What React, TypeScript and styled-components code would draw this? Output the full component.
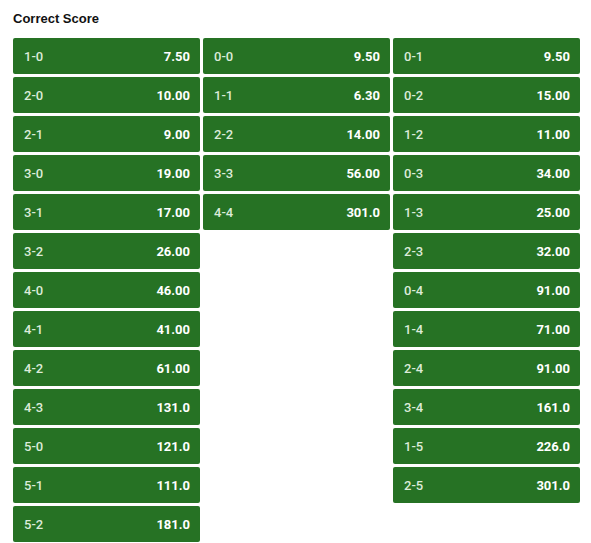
import React from "react";
import styled, { createGlobalStyle } from "styled-components";

const Global = createGlobalStyle`
  html, body { margin: 0; padding: 0; background: #fff; }
  body { font-family: Roboto, "Liberation Sans", Arial, sans-serif; }
`;

const Wrap = styled.div`
  padding: 11px 11px 0 13px;
`;

const Title = styled.div`
  font-family: "Liberation Sans", Arial, sans-serif;
  font-size: 13px;
  font-weight: 700;
  line-height: 16px;
  color: #111;
  margin-bottom: 11px;
`;

const Columns = styled.div`
  display: grid;
  grid-template-columns: repeat(3, 187px);
  column-gap: 3px;
  align-items: start;
`;

const Column = styled.div`
  display: flex;
  flex-direction: column;
  gap: 3px;
`;

const Button = styled.div`
  height: 36px;
  box-sizing: border-box;
  display: flex;
  align-items: center;
  justify-content: space-between;
  padding: 0 10px 0 11px;
  background: #267224;
  border-radius: 2px;
  font-size: 13px;
`;

const Label = styled.span`
  color: #dcebd9;
  font-weight: 500;
`;

const Price = styled.span`
  color: #fff;
  font-weight: 700;
`;

const cols: [string, string][][] = [
  [
    ["1-0", "7.50"], ["2-0", "10.00"], ["2-1", "9.00"], ["3-0", "19.00"],
    ["3-1", "17.00"], ["3-2", "26.00"], ["4-0", "46.00"], ["4-1", "41.00"],
    ["4-2", "61.00"], ["4-3", "131.0"], ["5-0", "121.0"], ["5-1", "111.0"],
    ["5-2", "181.0"],
  ],
  [
    ["0-0", "9.50"], ["1-1", "6.30"], ["2-2", "14.00"], ["3-3", "56.00"],
    ["4-4", "301.0"],
  ],
  [
    ["0-1", "9.50"], ["0-2", "15.00"], ["1-2", "11.00"], ["0-3", "34.00"],
    ["1-3", "25.00"], ["2-3", "32.00"], ["0-4", "91.00"], ["1-4", "71.00"],
    ["2-4", "91.00"], ["3-4", "161.0"], ["1-5", "226.0"], ["2-5", "301.0"],
  ],
];

export default function App() {
  return (
    <>
      <Global />
      <Wrap>
        <Title>Correct Score</Title>
        <Columns>
          {cols.map((col, i) => (
            <Column key={i}>
              {col.map(([l, p]) => (
                <Button key={l}>
                  <Label>{l}</Label>
                  <Price>{p}</Price>
                </Button>
              ))}
            </Column>
          ))}
        </Columns>
      </Wrap>
    </>
  );
}
